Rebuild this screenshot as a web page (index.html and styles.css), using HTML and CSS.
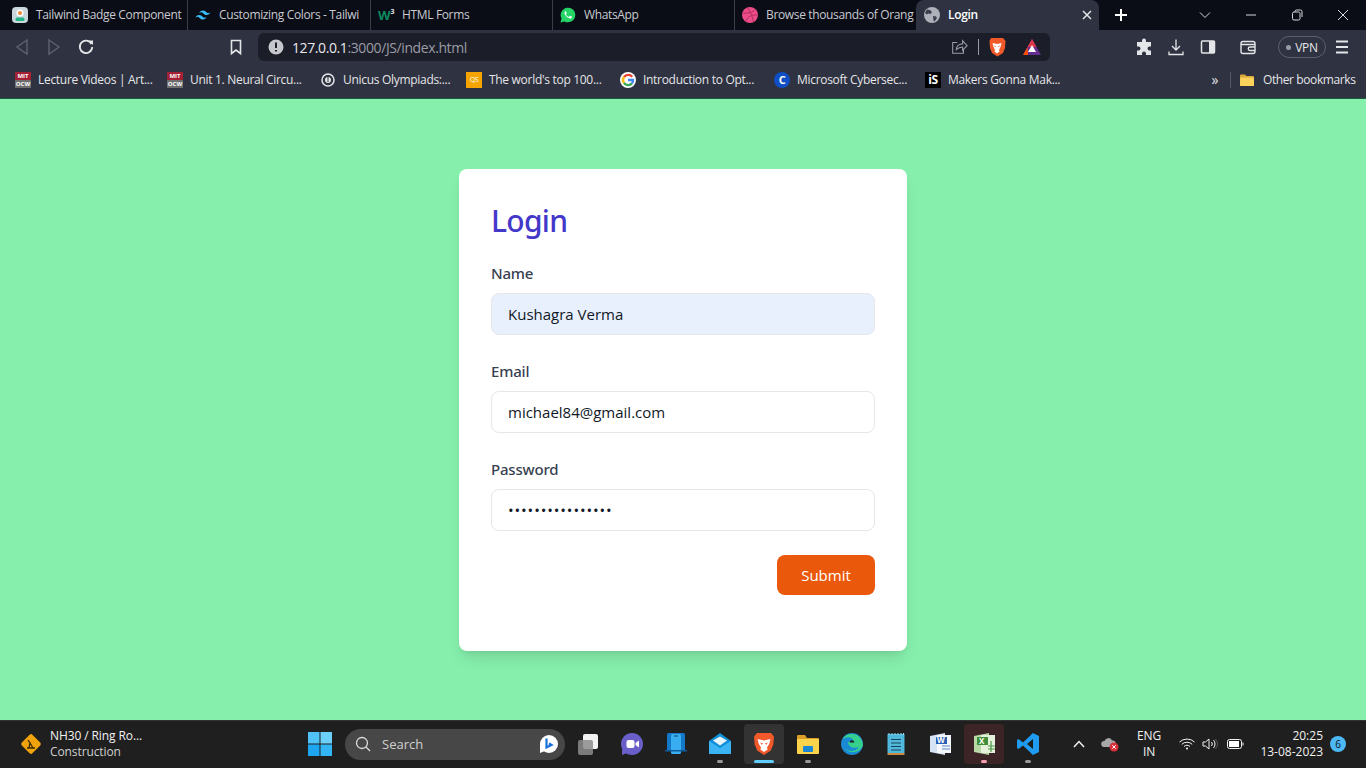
FILE: index.html
```html
<!DOCTYPE html>
<html lang="en">
<head>
    <meta charset="UTF-8">
    <meta name="viewport" content="width=device-width, initial-scale=1.0">
    <title>Login</title>
    <link rel="stylesheet" href="styles.css">
</head>
<body>
    <!-- Browser tabs -->
    <div class="tabbar">
        <div class="tab tab-wide">
            <svg class="fav" viewBox="0 0 16 16"><rect width="16" height="16" rx="4" fill="#c9d6da"/><circle cx="8" cy="6" r="3.600" fill="#fff"/><circle cx="8" cy="6" r="2" fill="#f08a3c"/><rect x="3.500" y="10.500" width="9" height="3.500" rx="1.500" fill="#1fb587"/></svg>
            <span class="tab-text">Tailwind Badge Component</span>
        </div>
        <div class="tab tab-wide">
            <svg class="fav" viewBox="0 0 16 16"><path fill="#38bdf8" d="M8 3.500c-2 0-3.300 1-3.800 3 .8-1 1.700-1.400 2.700-1.100.6.100 1 .5 1.500 1 .7.700 1.500 1.600 3.200 1.600 2 0 3.300-1 3.800-3-.8 1-1.700 1.400-2.700 1.100-.6-.1-1-.5-1.500-1C10.500 4.400 9.700 3.500 8 3.500zM4.200 8C2.200 8 .9 9 .4 11c.8-1 1.700-1.400 2.700-1.100.6.100 1 .5 1.500 1 .7.700 1.500 1.600 3.200 1.600 2 0 3.300-1 3.800-3-.8 1-1.700 1.400-2.700 1.100-.6-.1-1-.5-1.500-1C6.700 8.900 5.900 8 4.200 8z"/></svg>
            <span class="tab-text">Customizing Colors - Tailwi</span>
        </div>
        <div class="tab">
            <span class="fav fav-w3">W<sup>3</sup></span>
            <span class="tab-text">HTML Forms</span>
        </div>
        <div class="tab">
            <svg class="fav" viewBox="0 0 16 16"><path fill="#25d366" d="M.5 15.500l1.100-3.900A7.300 7.300 0 1 1 4.400 14.400z"/><path fill="#fff" d="M5.600 4.200c-.3 0-.9.400-1 1.300-.2 1.200.6 2.600 1.700 3.800 1.200 1.300 2.700 2.200 3.900 2.200.9 0 1.600-.6 1.700-1.300.1-.3 0-.5-.2-.6l-1.500-.7c-.2-.1-.4 0-.5.100l-.6.800c-.1.100-.3.200-.5.100-1.100-.5-2-1.300-2.600-2.400-.1-.2 0-.3.100-.4l.5-.6c.1-.2.100-.3 0-.5l-.6-1.500c-.1-.2-.2-.3-.4-.3z"/></svg>
            <span class="tab-text">WhatsApp</span>
        </div>
        <div class="tab tab-last">
            <svg class="fav" viewBox="0 0 16 16"><circle cx="8" cy="8" r="8" fill="#ea4c89"/><path fill="none" stroke="#b5305f" stroke-width="1" d="M1 6c5 .5 9 0 12-3.500M4 14.500C5.500 10 9 7.500 15.500 8M5.500 1c3 3.500 5 8.500 6 14"/></svg>
            <span class="tab-text">Browse thousands of Orang</span>
        </div>
        <div class="tab tab-active">
            <svg class="fav" viewBox="0 0 16 16"><circle cx="8" cy="8" r="8" fill="#aeb1ba"/><path fill="#3a3d4b" d="M3 2.500l3 .5 2 2-1.500 2L4 6.500l-1 1-2-1.500zM9 9l3 .5 1 1.500-2.500 3.500-1-1z"/></svg>
            <span class="tab-text">Login</span>
            <svg class="tab-close" viewBox="0 0 10 10"><path d="M1 1l8 8M9 1l-8 8"/></svg>
        </div>
        <svg class="new-tab" viewBox="0 0 12 12"><path d="M6 0v12M0 6h12"/></svg>
        <svg class="win-btn win-first" viewBox="0 0 12 12"><path d="M1 3.500l5 5 5-5"/></svg>
        <svg class="win-btn" viewBox="0 0 12 12"><path d="M1 6h10"/></svg>
        <svg class="win-btn" viewBox="0 0 12 12"><rect x="1.500" y="3" width="7.500" height="8" rx="1.500"/><path d="M4 3V2.500A1.500 1.500 0 0 1 5.500 1h4A1.500 1.500 0 0 1 11 2.500V8"/></svg>
        <svg class="win-btn" viewBox="0 0 12 12"><path d="M1 1l10 10M11 1L1 11"/></svg>
    </div>

    <!-- Address bar -->
    <div class="toolbar">
        <svg class="tool-btn tool-off" viewBox="0 0 20 20"><path d="M15 3L5 10l10 7z"/></svg>
        <svg class="tool-btn tool-off" viewBox="0 0 20 20"><path d="M5 3l10 7-10 7z"/></svg>
        <svg class="tool-btn" viewBox="0 0 20 20"><path stroke-width="1.800" d="M15.500 7A6.200 6.200 0 1 0 16.200 10"/><path fill="#e4e5e8" stroke="none" d="M12.500 3.500h4.500V8z"/></svg>
        <svg class="tool-btn bookmark" viewBox="0 0 20 20"><path stroke-width="1.600" d="M5.500 3.500h9v13L10 13l-4.500 3.500z"/></svg>
        <div class="omnibox">
            <svg class="omni-info" viewBox="0 0 16 16"><circle cx="8" cy="8" r="7.500" fill="#c5c7cc"/><path d="M8 3.500v5.500M8 11v1.500" stroke="#1c1e29" stroke-width="2"/></svg>
            <span class="url"><b>127.0.0.1</b>:3000/JS/index.html</span>
            <svg class="omni-share" viewBox="0 0 20 20"><path d="M8 5H3v12h12v-5M7 13c0-4 3-6.500 7-6.500V3l5 5.500-5 5V10c-3 0-5 1-7 3z"/></svg>
            <span class="omni-sep"></span>
            <svg class="omni-brave" viewBox="0 0 18 20"><path fill="#f1592a" d="M3 1h12l2.500 3-.5 7-2 5-5.500 3.500L4 16l-2-5-.5-7z"/><path fill="#fff" d="M4.500 6L9 7l4.500-1-1 4-1.500 3 .5 1.500-2.500 2-2.500-2L7 13l-1.500-3z"/><path fill="#f1592a" d="M6 8.500l2 .8-.8 1zM12 8.500l-2 .8.800 1z"/></svg>
            <svg class="omni-bat" viewBox="0 0 20 18"><path fill="#662d91" d="M10 1l9 16H1z"/><path fill="#e0374a" d="M10 1l4.500 8H5.500z"/><path fill="#ff5000" d="M5.500 9L1 17h5z"/><path fill="#fff" d="M10 7l4 7H6z"/></svg>
        </div>
        <svg class="tool-btn tool-first" viewBox="0 0 20 20"><path fill="#e4e5e8" stroke="none" d="M8 3.500a2 2 0 0 1 4 0V5h5v4.500h-1.500a2 2 0 0 0 0 4H17V18h-5v-1.500a2 2 0 0 0-4 0V18H3v-4.500h1.500a2 2 0 0 0 0-4H3V5h5z"/></svg>
        <svg class="tool-btn" viewBox="0 0 20 20"><path stroke-width="1.300" d="M10 2.500v10M6 9l4 4 4-4M3 14.500v3h14v-3"/></svg>
        <svg class="tool-btn" viewBox="0 0 20 20"><rect x="3.500" y="4" width="13" height="12" rx="1" stroke-width="1.500"/><rect x="11" y="4" width="5.500" height="12" fill="#e4e5e8" stroke="none"/></svg>
        <svg class="tool-btn tool-wallet" viewBox="0 0 20 20"><rect x="3" y="4.500" width="14" height="12" rx="2" stroke-width="1.400"/><path stroke-width="1.400" d="M3 7.500h14M17 10h-5a1.500 1.500 0 0 0 0 3.500h5"/></svg>
        <div class="vpn"><span class="vpn-dot"></span>VPN</div>
        <svg class="tool-btn" viewBox="0 0 20 20"><path stroke-width="1.800" d="M4 4.500h12M4 10h12M4 15.500h12"/></svg>
    </div>

    <!-- Bookmarks -->
    <div class="bookmarks">
        <div class="bm-list">
            <div class="bm"><span class="bm-ocw"><i>MIT</i><i>OCW</i></span>Lecture Videos | Art...</div>
            <div class="bm"><span class="bm-ocw"><i>MIT</i><i>OCW</i></span>Unit 1. Neural Circu...</div>
            <div class="bm">
                <svg class="fav" viewBox="0 0 16 16"><circle cx="8" cy="8" r="6" fill="none" stroke="#e4e5e8" stroke-width="1.500"/><circle cx="8" cy="8" r="3" fill="#e4e5e8"/><path d="M8 5v5" stroke="#2f3240" stroke-width="1"/></svg>
                Unicus Olympiads:...
            </div>
            <div class="bm"><span class="bm-qs">QS</span>The world's top 100...</div>
            <div class="bm">
                <svg class="fav" viewBox="0 0 16 16"><circle cx="8" cy="8" r="8" fill="#fff"/><g fill="none" stroke-width="2.400"><path stroke="#ea4335" d="M12.200 4.700A5.200 5.200 0 0 0 4 5"/><path stroke="#fbbc05" d="M4 5a5.200 5.200 0 0 0 0 6"/><path stroke="#34a853" d="M4 11a5.200 5.200 0 0 0 8 .4"/><path stroke="#4285f4" d="M12 11.400A5.200 5.200 0 0 0 13 8H8"/></g></svg>
                Introduction to Opt...
            </div>
            <div class="bm"><span class="bm-c">C</span>Microsoft Cybersec...</div>
            <div class="bm"><span class="bm-is">iS</span>Makers Gonna Mak...</div>
        </div>
        <span class="bm-more">»</span>
        <span class="bm-sep"></span>
        <svg class="fav" viewBox="0 0 16 16"><path fill="#d9a93a" d="M1 3.500A1 1 0 0 1 2 2.500h4l1.500 1.500H14a1 1 0 0 1 1 1v8a1 1 0 0 1-1 1H2a1 1 0 0 1-1-1z"/><rect x="1" y="5.500" width="14" height="8.500" rx="1" fill="#fbd35a"/></svg>
        <span class="bm-other">Other bookmarks</span>
    </div>

    <!-- Page -->
    <main class="page">
        <form class="card">
            <h1 class="card-title">Login</h1>
            <div class="form-group">
                <label for="name" class="form-label">Name</label>
                <input type="text" id="name" class="form-control form-filled" value="Kushagra Verma">
            </div>
            <div class="form-group">
                <label for="email" class="form-label">Email</label>
                <input type="email" id="email" class="form-control" value="michael84@gmail.com">
            </div>
            <div class="form-group">
                <label for="password" class="form-label">Password</label>
                <input type="password" id="password" class="form-control form-password" value="michael84@gmail1">
            </div>
            <div class="form-actions">
                <button type="submit" class="btn-submit">Submit</button>
            </div>
        </form>
    </main>

    <!-- Windows taskbar -->
    <footer class="taskbar">
        <div class="weather">
            <svg class="weather-icon" viewBox="0 0 24 24"><rect x="4.500" y="4.500" width="15" height="15" rx="2" fill="#f0a30a" transform="rotate(45 12 12)"/><path d="M9 8l2 3-1 5M11 11l3 5M8 16h8" stroke="#3a2a05" stroke-width="1.300" fill="none"/></svg>
            <div class="weather-text">
                <span>NH30 / Ring Ro...</span>
                <span class="weather-sub">Construction</span>
            </div>
        </div>
        <svg class="start" viewBox="0 0 24 24"><rect x="0" y="0" width="11.500" height="11.500" fill="#4fc3f7"/><rect x="12.500" y="0" width="11.500" height="11.500" fill="#6ad0fa"/><rect x="0" y="12.500" width="11.500" height="11.500" fill="#1ea7f0"/><rect x="12.500" y="12.500" width="11.500" height="11.500" fill="#33b5f5"/></svg>
        <div class="search">
            <svg class="search-icon" viewBox="0 0 16 16"><circle cx="7" cy="7" r="5.500"/><path d="M11 11l4 4"/></svg>
            <span>Search</span>
            <svg class="search-bing" viewBox="0 0 20 20"><circle cx="10" cy="10" r="9" fill="#fff"/><path d="M1 10v9l5-2z" fill="#fff"/><path d="M7.500 4.500v9l5-2.500-2.500-1.500" fill="none" stroke="#1a6fd8" stroke-width="2.200"/></svg>
        </div>
        <div class="task"><svg class="task-icon" viewBox="0 0 24 24"><rect x="7" y="2" width="15" height="15" rx="2" fill="#f2f2f2"/><rect x="2" y="8" width="15" height="15" rx="2" fill="#8c8c8c" opacity=".85"/></svg></div>
        <div class="task"><svg class="task-icon" viewBox="0 0 24 24"><circle cx="12" cy="12" r="11" fill="#6a5fc9"/><path d="M2 17v6l5-2z" fill="#6a5fc9"/><rect x="6.500" y="8" width="8" height="8" rx="2" fill="#fff"/><path d="M15.500 11l3.500-2.500v7L15.500 13z" fill="#fff"/></svg></div>
        <div class="task"><svg class="task-icon" viewBox="0 0 24 24"><rect x="3" y="1" width="18" height="18" rx="1.500" fill="#1478c8"/><rect x="7" y="2" width="10" height="20" rx="1.500" fill="#38aef0"/><rect x="10" y="3.500" width="4" height="1" fill="#0d3e66"/><path d="M1 18h22v1.500H1z" fill="#0f5c9c"/></svg></div>
        <div class="task task-open"><svg class="task-icon" viewBox="0 0 24 24"><path d="M1 9l11-8 11 8v13H1z" fill="#0f8fd8"/><path d="M1 9l11 7 11-7v13H1z" fill="#3ab4f2"/><path d="M5 8.500l7-4 7 4-7 5z" fill="#e6f5fd"/></svg></div>
        <div class="task task-active"><svg class="task-icon" viewBox="0 0 24 24"><path fill="#f1592a" d="M5 1h14l3 3.500-.7 8-2.500 6L12 23l-6.800-4.500-2.500-6L2 4.500z"/><path fill="#fff" d="M5.500 7L12 8.500 18.500 7l-1.300 5L15 15.500l.6 2L12 20l-3.600-2.500.6-2L6.800 12z"/><path fill="#f1592a" d="M8 10.500l3 1-1.200 1.300zM16 10.500l-3 1 1.200 1.300z"/></svg></div>
        <div class="task task-open"><svg class="task-icon" viewBox="0 0 24 24"><path d="M1 4a1 1 0 0 1 1-1h7l2 3h11a1 1 0 0 1 1 1v3H1z" fill="#d99f28"/><rect x="1" y="7" width="22" height="15" rx="1" fill="#fcd34d"/><rect x="7" y="14" width="10" height="6" rx="1" fill="#1b86d1"/></svg></div>
        <div class="task"><svg class="task-icon" viewBox="0 0 24 24"><circle cx="12" cy="12" r="11" fill="#1a8ad4"/><path d="M22 9a11 11 0 0 0-20-1c3-4 11-4 12 2H8c0 5 6 7 11 5-3 5-11 5-14 1 3 6 15 6 18-3z" fill="#35d08c"/><path d="M9.500 10.500c1-3 4-3 5 0z" fill="#1e1e1e"/></svg></div>
        <div class="task"><svg class="task-icon" viewBox="0 0 24 24"><rect x="3.500" y="2" width="17" height="19" fill="#4fb8dc"/><path d="M3.500 21h17v2h-17z" fill="#d08a3e"/><path d="M7 7.500h10M7 11h10M7 14.500h10M7 18h10" stroke="#16445a" stroke-width="1.200"/><path d="M5 1v2M8 1v2M11 1v2M14 1v2M17 1v2M19.500 1v2" stroke="#9adcf0" stroke-width="1"/></svg></div>
        <div class="task"><svg class="task-icon" viewBox="0 0 24 24"><path d="M2 4l15-3v22L2 20z" fill="#d5e3f5"/><rect x="9" y="3" width="14" height="18" fill="#f4f7fb"/><rect x="8" y="5" width="11" height="7" fill="#2b5fb3"/><path d="M14 14h8M14 17h8" stroke="#5d87c8" stroke-width="1.200"/><text x="9" y="11" class="task-letter">W</text></svg></div>
        <div class="task task-excel"><svg class="task-icon" viewBox="0 0 24 24"><path d="M2 4l15-3v22L2 20z" fill="#b9d8a5"/><rect x="9" y="3" width="14" height="18" fill="#e6f1dc"/><rect x="5" y="5" width="11" height="8" fill="#3f8f3a"/><path d="M16 14h7M16 17h7M19 9v11" stroke="#4d9a48" stroke-width="1.200"/><text x="7" y="12" class="task-letter">X</text></svg></div>
        <div class="task task-open"><svg class="task-icon" viewBox="0 0 24 24"><path d="M17 1l6 3v16l-6 3L7 13.500 2.500 17 1 16v-8l1.500-1L7 10.500z" fill="#1f9cf0"/><path d="M17 7l-6 5 6 5z" fill="#1e1e1e"/></svg></div>

        <div class="tray">
            <svg class="tray-up" viewBox="0 0 12 8"><path d="M1 7l5-5.500L11 7"/></svg>
            <svg class="tray-cloud" viewBox="0 0 18 16"><path d="M3 11a3 3 0 0 1 .5-6 4 4 0 0 1 7.500-.5A3 3 0 0 1 12 11z" fill="#a8a8a8"/><circle cx="13" cy="11" r="4.500" fill="#d8303a"/><path d="M11.300 9.300l3.400 3.400M14.700 9.300l-3.400 3.400" stroke="#fff" stroke-width="1"/></svg>
            <div class="tray-lang"><span>ENG</span><span>IN</span></div>
            <svg class="tray-wifi" viewBox="0 0 16 12"><path d="M.5 4a11 11 0 0 1 15 0M2.800 6.300a7.500 7.500 0 0 1 10.400 0M5 8.500a4.200 4.200 0 0 1 6 0"/><circle cx="8" cy="10.500" r="1" fill="#fff" stroke="none"/></svg>
            <svg class="tray-vol" viewBox="0 0 16 12"><path d="M1 4v4h2.500L7 11V1L3.500 4zM9.500 4a3 3 0 0 1 0 4M11.500 2a6 6 0 0 1 0 8"/><path d="M13.500 1a8 8 0 0 1 0 10" stroke="#555"/></svg>
            <svg class="tray-bat" viewBox="0 0 17 11"><rect x=".5" y="1" width="14" height="9" rx="2"/><rect x="2" y="2.500" width="10" height="6" fill="#fff" stroke="none"/><path d="M16 4v3"/></svg>
            <div class="tray-clock"><span>20:25</span><span>13-08-2023</span></div>
            <span class="tray-badge">6</span>
        </div>
    </footer>
</body>
</html>
```

FILE: styles.css
```css
/* Base */
* {
    margin: 0;
    padding: 0;
    box-sizing: border-box;
}

html, body {
    height: 100%;
}

body {
    font-family: "Open Sans", "Noto Sans", sans-serif;
    font-size: 12px;
    color: #e4e5e8;
    display: flex;
    flex-direction: column;
    overflow: hidden;
    background-color: #86efac;
}

svg {
    display: block;
    flex-shrink: 0;
}

.fav {
    width: 16px;
    height: 16px;
    flex-shrink: 0;
}

/* Tabs */
.tabbar {
    height: 30px;
    display: flex;
    align-items: stretch;
    padding-left: 5px;
    background-color: #0a0c16;
}

.tab {
    width: 182px;
    display: flex;
    align-items: center;
    gap: 8px;
    padding: 0 2px 1px 7px;
    color: #c8cad0;
    border-right: 1px solid #3b3d4a;
    white-space: nowrap;
}

.tab-wide {
    width: 183px;
}

.tab-last {
    width: 181px;
    border-right: none;
}

.tab-text {
    flex: 1;
    min-width: 0;
    letter-spacing: -0.35px;
}

.fav-w3 {
    color: #0a8a5f;
    font-weight: 700;
    font-size: 13px;
    line-height: 16px;
    letter-spacing: -1px;
}

.fav-w3 sup {
    font-size: 7px;
    color: #e4e5e8;
    vertical-align: top;
    line-height: 10px;
    margin-left: 1px;
}

.tab-active {
    width: 183px;
    border-right: none;
    border-radius: 8px 8px 0 0;
    background-color: #2f3240;
    color: #fff;
    font-weight: 600;
    padding: 0 7px 1px 8px;
}

.tab-close {
    width: 10px;
    height: 10px;
    fill: none;
    stroke: #e4e5e8;
    stroke-width: 1.500;
}

.new-tab {
    width: 12px;
    height: 12px;
    margin: 9px 0 0 16px;
    fill: none;
    stroke: #fff;
    stroke-width: 2;
}

.win-btn {
    width: 12px;
    height: 12px;
    margin: 9px 0 0 34px;
    fill: none;
    stroke: #d8d9dd;
    stroke-width: 1;
}

.win-first {
    margin-left: 72px;
}

/* Address bar */
.toolbar {
    height: 34px;
    display: flex;
    align-items: center;
    padding-left: 6px;
    background-color: #2f3240;
}

.tool-btn {
    width: 32px;
    height: 20px;
    fill: none;
    stroke: #e4e5e8;
    stroke-width: 1.500;
}

.tool-off {
    stroke: #5c5f6d;
}

.bookmark {
    margin-left: 118px;
}

.omnibox {
    width: 792px;
    height: 28px;
    margin-left: 6px;
    display: flex;
    align-items: center;
    border-radius: 6px;
    padding: 0 8px 0 10px;
    background-color: #1b1d28;
}

.omni-info {
    width: 16px;
    height: 16px;
}

.url {
    margin-left: 8px;
    flex: 1;
    font-size: 14px;
    color: #9a9ca5;
    letter-spacing: -0.4px;
}

.url b {
    font-weight: 400;
    color: #e8e9ec;
}

.omni-share {
    width: 18px;
    height: 18px;
    fill: none;
    stroke: #9a9ca5;
    stroke-width: 1.200;
}

.omni-sep {
    width: 1px;
    height: 16px;
    margin: 0 9px 0 10px;
    background-color: #9a9ca5;
}

.omni-brave {
    width: 18px;
    height: 20px;
}

.omni-bat {
    width: 20px;
    height: 18px;
    margin-left: 16px;
}

.tool-first {
    margin-left: 78px;
}

.tool-wallet {
    margin-left: 8px;
}

.vpn {
    width: 48px;
    height: 22px;
    margin-left: 14px;
    display: flex;
    align-items: center;
    justify-content: center;
    gap: 4px;
    border: 1px solid #5c5f6d;
    border-radius: 11px;
    font-size: 12px;
    letter-spacing: -0.3px;
}

.vpn-dot {
    width: 5px;
    height: 5px;
    border-radius: 50%;
    background-color: #9a9ca5;
}

/* Bookmarks */
.bookmarks {
    height: 35px;
    display: flex;
    align-items: center;
    padding: 0 0 3px 15px;
    background-color: #2f3240;
    border-bottom: 1px solid #1f5a3a;
}

.bm-list {
    width: 1192px;
    display: grid;
    grid-template-columns: 152px 153px 146px 154px 154px 151px 1fr;
}

.bm {
    display: flex;
    align-items: center;
    gap: 7px;
    white-space: nowrap;
    letter-spacing: -0.3px;
}

.bm-ocw {
    width: 16px;
    height: 16px;
    display: flex;
    flex-direction: column;
    flex-shrink: 0;
}

.bm-ocw i {
    height: 8px;
    font-style: normal;
    font-weight: 700;
    font-size: 6px;
    line-height: 8px;
    letter-spacing: 0;
    text-align: center;
    color: #fff;
    background-color: #a31f34;
}

.bm-ocw i + i {
    background-color: #6e6e6e;
}

.bm-qs {
    width: 16px;
    height: 16px;
    flex-shrink: 0;
    font-size: 7px;
    line-height: 16px;
    text-align: center;
    color: #fff;
    background-color: #f5a400;
}

.bm-c {
    width: 16px;
    height: 16px;
    flex-shrink: 0;
    border-radius: 50%;
    font-weight: 700;
    font-size: 11px;
    line-height: 16px;
    text-align: center;
    color: #fff;
    background-color: #0f4ec4;
}

.bm-is {
    width: 16px;
    height: 16px;
    flex-shrink: 0;
    font-weight: 700;
    font-size: 12px;
    line-height: 16px;
    text-align: center;
    color: #fff;
    background-color: #000;
}

.bm-more {
    width: 16px;
    text-align: center;
    font-size: 14px;
    line-height: 16px;
}

.bm-sep {
    width: 1px;
    height: 16px;
    margin: 0 8px 0 7px;
    background-color: #55586a;
}

.bm-other {
    margin-left: 8px;
    white-space: nowrap;
    letter-spacing: -0.4px;
}

/* Login card */
.page {
    flex: 1;
    display: flex;
    align-items: center;
    justify-content: center;
    background-color: #86efac;
}

.card {
    width: 448px;
    padding: 32px 32px 56px;
    border-radius: 8px;
    background-color: white;
    box-shadow: 0 10px 15px -3px rgba(0, 0, 0, 0.1), 0 4px 6px -4px rgba(0, 0, 0, 0.1);
}

.card-title {
    margin-bottom: 20px;
    font-family: "Noto Sans", "Open Sans", sans-serif;
    font-size: 30px;
    font-weight: 500;
    line-height: 40px;
    color: #4338ca;
    letter-spacing: -0.7px;
}

.form-group {
    margin-bottom: 24px;
}

.form-label {
    display: block;
    margin-bottom: 8px;
    font-family: "Noto Sans", "Open Sans", sans-serif;
    font-size: 15px;
    font-weight: 500;
    line-height: 24px;
    color: #374151;
    letter-spacing: -0.2px;
}

.form-control {
    display: block;
    width: 100%;
    height: 42px;
    padding: 0 16px;
    font-family: inherit;
    font-size: 15px;
    color: #111827;
    background-color: white;
    border: 1px solid #e5e7eb;
    border-radius: 8px;
    outline: none;
}

.form-filled {
    background-color: #e8f0fe;
}

.form-password {
    letter-spacing: 0.9px;
}

.form-actions {
    display: flex;
    justify-content: flex-end;
}

.btn-submit {
    width: 98px;
    height: 40px;
    font-family: inherit;
    font-size: 15px;
    color: white;
    background-color: #ea580c;
    border: none;
    border-radius: 8px;
}

/* Taskbar */
.taskbar {
    height: 48px;
    display: flex;
    align-items: center;
    padding-bottom: 1px;
    background-color: #1f1f1f;
    border-top: 1px solid #333;
}

.weather {
    width: 298px;
    display: flex;
    align-items: center;
    gap: 7px;
    padding-left: 19px;
}

.weather-icon {
    width: 24px;
    height: 24px;
}

.weather-text {
    display: flex;
    flex-direction: column;
    line-height: 16px;
    font-size: 12px;
    letter-spacing: -0.1px;
    color: #f2f2f2;
}

.weather-sub {
    color: #cfcfcf;
}

.start {
    width: 24px;
    height: 24px;
    margin: 0 13px 0 10px;
}

.search {
    width: 220px;
    height: 31px;
    display: flex;
    align-items: center;
    gap: 11px;
    padding: 0 6px 0 10px;
    border-radius: 16px;
    background-color: #474747;
    font-size: 13px;
    color: #cfcfcf;
}

.search-icon {
    width: 16px;
    height: 16px;
    fill: none;
    stroke: #dcdcdc;
    stroke-width: 1.300;
}

.search-bing {
    width: 20px;
    height: 20px;
    margin-left: auto;
}

.task {
    width: 44px;
    height: 40px;
    position: relative;
    display: flex;
    align-items: center;
    justify-content: center;
    border-radius: 4px;
}

.search + .task {
    margin-left: 1px;
}

.task-icon {
    width: 24px;
    height: 24px;
}

.task-letter {
    font-size: 8px;
    font-weight: 700;
    fill: white;
}

.task-open::after,
.task-active::after,
.task-excel::after {
    content: "";
    position: absolute;
    left: 19px;
    bottom: 1px;
    width: 6px;
    height: 3px;
    border-radius: 2px;
    background-color: #9a9a9a;
}

.task-active,
.task-excel {
    width: 40px;
    margin: 0 2px;
}

.task-active {
    background-color: #333;
}

.task-active::after {
    left: 10px;
    width: 20px;
    background-color: #60cdff;
}

.task-excel {
    background-color: #3d2426;
}

.task-excel::after {
    left: 17px;
    background-color: #f4a0b0;
}

.tray {
    flex: 1;
    display: flex;
    align-items: center;
    color: #f2f2f2;
}

.tray-up {
    width: 12px;
    height: 8px;
    margin-left: 23px;
    fill: none;
    stroke: #f2f2f2;
    stroke-width: 1.500;
}

.tray-cloud {
    width: 18px;
    height: 16px;
    margin-left: 16px;
}

.tray-lang {
    width: 30px;
    margin-left: 15px;
    display: flex;
    flex-direction: column;
    align-items: center;
    line-height: 16px;
    letter-spacing: -0.2px;
}

.tray-wifi,
.tray-vol,
.tray-bat {
    height: 12px;
    fill: none;
    stroke: #f2f2f2;
    stroke-width: 1;
}

.tray-wifi {
    width: 16px;
    margin-left: 15px;
}

.tray-vol {
    width: 16px;
    margin-left: 7px;
}

.tray-bat {
    width: 17px;
    margin-left: 9px;
}

.tray-clock {
    width: 70px;
    margin-left: 9px;
    display: flex;
    flex-direction: column;
    align-items: flex-end;
    line-height: 16px;
}

.tray-badge {
    width: 16px;
    height: 16px;
    margin-left: 7px;
    border-radius: 50%;
    background-color: #4cb8f5;
    color: #111;
    font-size: 10px;
    line-height: 16px;
    text-align: center;
}
```
